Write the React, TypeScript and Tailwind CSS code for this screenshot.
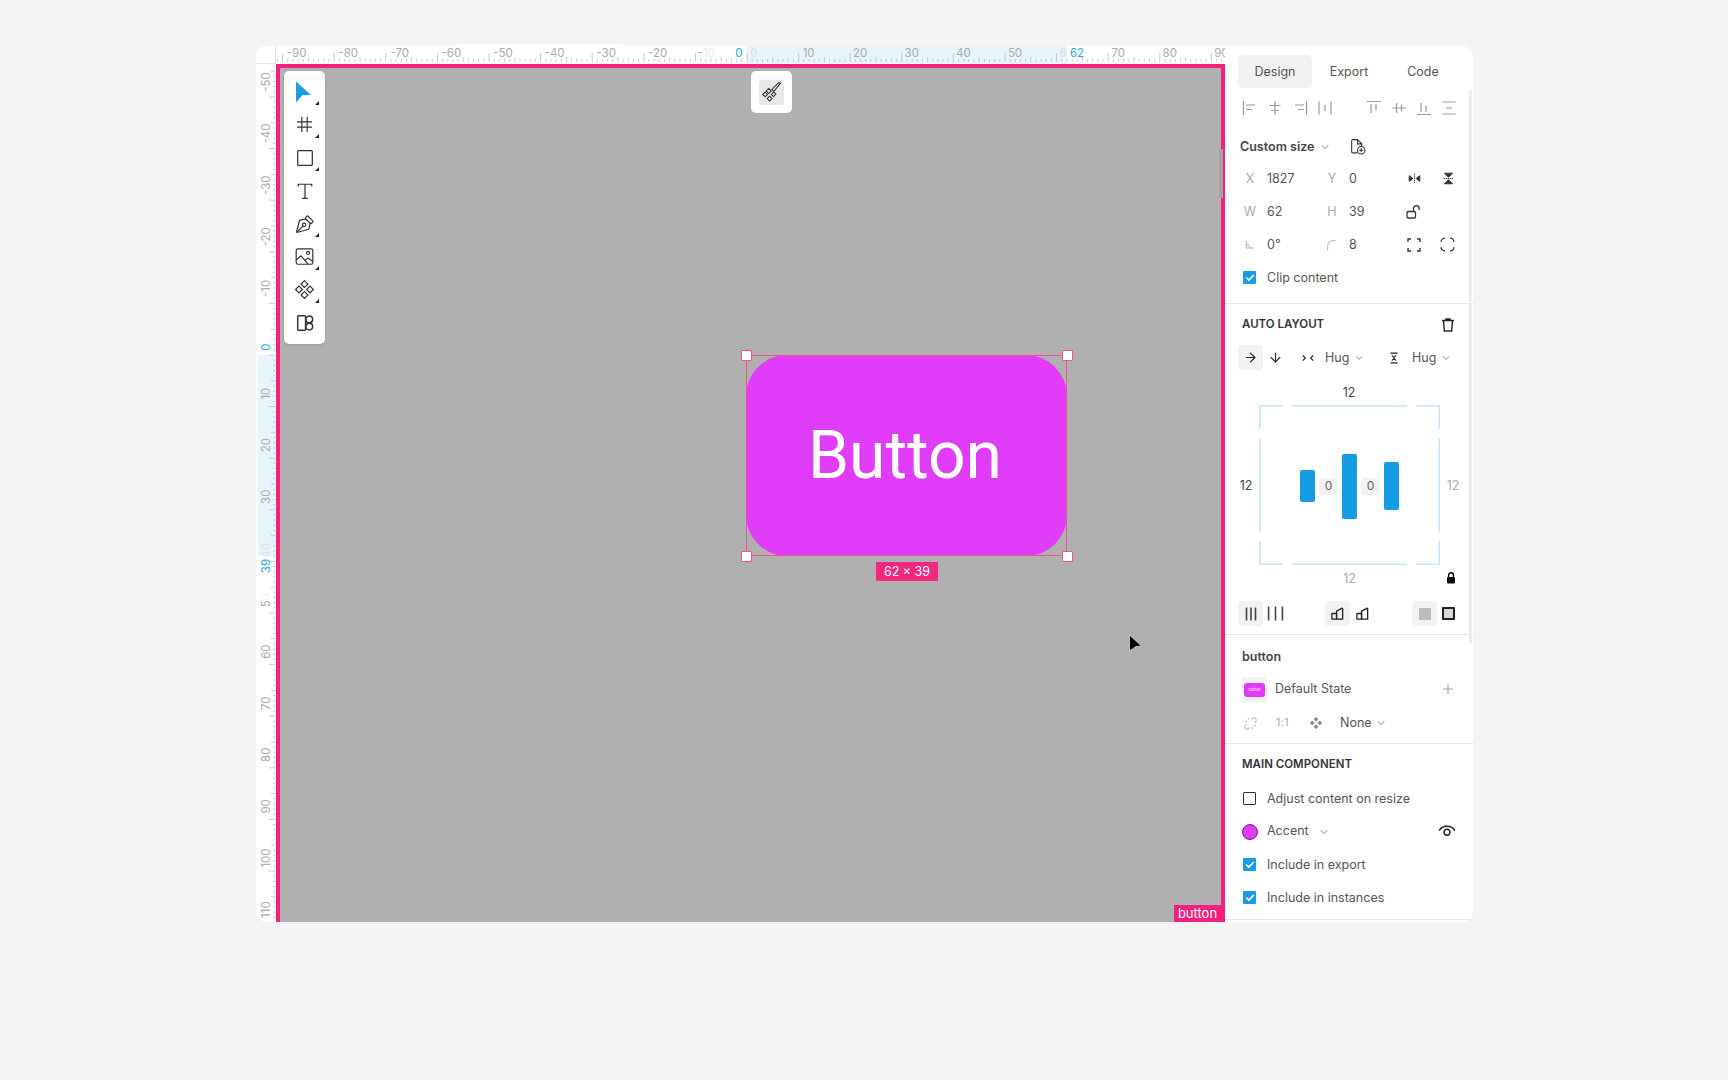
import React from 'react';
import { ArrowDown, ArrowRight, Check, ChevronDown, PenTool, Plus } from 'lucide-react';

const UNIT = 5.16;
const ORIGIN_X = 747 - 276;
const ORIGIN_Y = 355 - 64;

const Ic: React.FC<{ size?: number; className?: string; sw?: number; children: React.ReactNode }> = ({ size = 16, className, sw = 1.2, children }) => (
  <svg width={size} height={size} viewBox="0 0 16 16" fill="none" stroke="currentColor" strokeWidth={sw} className={className}>
    {children}
  </svg>
);

// Top ruler, ticks every unit and a label every ten
const TopRuler = () => {
  const ticks = Array.from({ length: 190 }, (_, i) => i - 95);
  const labels = [-90, -80, -70, -60, -50, -40, -30, -20, 10, 20, 30, 40, 50, 70, 80, 90];
  return (
    <svg width={949} height={18} className="shrink-0 block">
      <rect x={ORIGIN_X} y={0} width={320} height={18} fill="#e6f4fc" />
      {ticks.map(u => {
        const x = ORIGIN_X + u * UNIT;
        const len = u % 10 === 0 ? 9 : u % 5 === 0 ? 5 : 3;
        return <line key={u} x1={x} x2={x} y1={16 - len} y2={16} stroke="#bdbdbd" strokeWidth={0.8} />;
      })}
      {labels.map(u => (
        <text key={u} x={ORIGIN_X + u * UNIT + (u < 0 ? 14 : 10)} y={11} textAnchor="middle" fontSize={11.5} fill="#ababab">
          {u}
        </text>
      ))}
      <text x={ORIGIN_X - 41} y={11} textAnchor="middle" fontSize={11.5} fill="#ababab">
        -<tspan fillOpacity={0.25}>10</tspan>
      </text>
      <text x={ORIGIN_X + 7} y={11} textAnchor="middle" fontSize={11.5} fill="#ababab" fillOpacity={0.3}>0</text>
      <text x={ORIGIN_X + 316} y={11} textAnchor="middle" fontSize={11.5} fill="#ababab" fillOpacity={0.3}>6</text>
      <text x={ORIGIN_X - 8} y={11} textAnchor="middle" fontSize={11.5} fill="#2ba6ee">0</text>
      <text x={ORIGIN_X + 330} y={11} textAnchor="middle" fontSize={11.5} fill="#2ba6ee">62</text>
    </svg>
  );
};

const SideRuler = () => {
  const ticks = Array.from({ length: 170 }, (_, i) => i - 57);
  const labels = [-50, -40, -30, -20, -10, 10, 20, 30, 60, 70, 80, 90, 100, 110];
  const label = (y: number, fill: string, text: React.ReactNode, op = 1) => (
    <text transform={`translate(14 ${y}) rotate(-90)`} textAnchor="middle" fontSize={11.5} fill={fill} fillOpacity={op}>
      {text}
    </text>
  );
  return (
    <svg width={20} height={858} className="shrink-0 block">
      <rect x={2} y={ORIGIN_Y} width={18} height={201} fill="#e6f4fc" />
      {ticks.map(u => {
        const y = ORIGIN_Y + u * UNIT;
        const len = u % 10 === 0 ? 6 : u % 5 === 0 ? 4 : 2;
        return <line key={u} x1={19 - len} x2={19} y1={y} y2={y} stroke="#bdbdbd" strokeWidth={0.8} />;
      })}
      {labels.map(u => (
        <React.Fragment key={u}>{label(ORIGIN_Y + u * UNIT - (u < 0 ? 15 : 13), '#ababab', u)}</React.Fragment>
      ))}
      {label(ORIGIN_Y + 40 * UNIT - 11, '#ababab', 40, 0.25)}
      {label(ORIGIN_Y + 50 * UNIT - 13, '#ababab', <><tspan>5</tspan><tspan fillOpacity={0.2}>0</tspan></>)}
      {label(ORIGIN_Y - 8, '#2ba6ee', 0)}
      {label(ORIGIN_Y + 211, '#2ba6ee', 39)}
    </svg>
  );
};

const ToolBtn: React.FC<{ more?: boolean; children: React.ReactNode }> = ({ more = true, children }) => (
  <div className="relative h-[33px] flex items-center justify-center text-[#333]">
    {children}
    {more && <span className="absolute right-[6px] bottom-[3px] w-0 h-0 border-l-[4px] border-l-transparent border-b-[4px] border-b-[#222]" />}
  </div>
);

const Toolbar = () => (
  <div className="absolute left-[4px] top-[3px] w-[41px] pt-[4px] pb-[5px] bg-white rounded-[5px] shadow-sm">
    <ToolBtn>
      <svg width={20} height={24} viewBox="0 0 20 24" className="mr-[3px]"><path d="M3 1.5 L18 15 L9.5 15 L3 22.5 Z" fill="#1a9de6" /></svg>
    </ToolBtn>
    <ToolBtn>
      <Ic size={17} sw={1.1}><path d="M5.5 1v14M10.5 1v14M1 5.5h14M1 10.5h14" /></Ic>
    </ToolBtn>
    <ToolBtn>
      <Ic size={18} sw={1.1}><rect x="1.5" y="1.5" width="13" height="13" rx="0.8" /></Ic>
    </ToolBtn>
    <ToolBtn more={false}>
      <Ic size={18} sw={1.1}><path d="M2 4V2h12v2M8 2v12M5.5 14.5h5" /></Ic>
    </ToolBtn>
    <ToolBtn>
      <PenTool size={20} strokeWidth={1.4} className="-scale-y-100" />
    </ToolBtn>
    <ToolBtn>
      <Ic size={19} sw={1}>
        <rect x="1" y="1.5" width="14" height="13" rx="1.5" />
        <circle cx="11" cy="5" r="1.3" />
        <path d="M1 11 L5 7.5 L11 14.5 M8.5 11 L11 9.5 L15 12" />
      </Ic>
    </ToolBtn>
    <ToolBtn>
      <Ic size={21} sw={0.9}>
        <path d="M8 1.2 10.6 3.8 8 6.4 5.4 3.8Z M8 9.6 10.6 12.2 8 14.8 5.4 12.2Z M3.8 5.4 6.4 8 3.8 10.6 1.2 8Z M12.2 5.4 14.8 8 12.2 10.6 9.6 8Z" />
      </Ic>
    </ToolBtn>
    <ToolBtn more={false}>
      <Ic size={18} sw={1.3}>
        <rect x="1.5" y="1.5" width="7" height="13" rx="0.8" />
        <circle cx="11.8" cy="4.8" r="3" />
        <circle cx="11.8" cy="11.2" r="3" />
      </Ic>
    </ToolBtn>
  </div>
);

const Handle: React.FC<{ className: string }> = ({ className }) => (
  <span className={`absolute w-[11px] h-[11px] bg-white border-[1.5px] border-[#f0528f] rounded-[1px] ${className}`} />
);

const Canvas = () => (
  <div className="relative flex-1 bg-[#b0b0b0] border-4 border-b-0 border-[#f5207e]">
    <Toolbar />
    <div className="absolute left-[471px] top-[3px] w-[41px] h-[42px] bg-white rounded-[5px] flex items-center justify-center">
      <div className="w-[25px] h-[25px] bg-[#e8e8e8] rounded-[3px] flex items-center justify-center text-[#333]">
        <Ic size={24} sw={0.7}>
          <path d="M13.6 2.2 12.6 1.6 7.9 6.3 9.2 7.6Z" />
          <path d="M5.8 5.6 7.5 7.3 5.8 9 4.1 7.3Z M9.2 8 10.6 9.4 9 11 7.6 9.6Z M3.4 8 5 9.6 3.4 11.2 1.8 9.6Z M6.4 10.8 8 12.4 6.4 14 4.8 12.4Z" />
        </Ic>
      </div>
    </div>

    {/* Selected frame */}
    <div className="absolute left-[466px] top-[287px] w-[321px] h-[201px]">
      <div className="w-full h-full pr-[3px] bg-[#e03cfa] rounded-[41px] flex items-center justify-center">
        <span className="text-white text-[66px] leading-none font-['Roboto',sans-serif]">Button</span>
      </div>
      <div className="absolute inset-0 border-[1.5px] border-[#f0528f]" />
      <Handle className="-left-[5.5px] -top-[5.5px]" />
      <Handle className="-right-[5.5px] -top-[5.5px]" />
      <Handle className="-left-[5.5px] -bottom-[5.5px]" />
      <Handle className="-right-[5.5px] -bottom-[5.5px]" />
      <div className="absolute left-[130px] top-[207px] w-[62px] h-[19px] pt-[1px] bg-[#f2277e] rounded-[1px] flex items-center justify-center text-white text-[12.5px]">
        62 × 39
      </div>
    </div>

    <svg className="absolute left-[848px] top-[566px]" width={15} height={18} viewBox="0 0 15 18">
      <path d="M1.5 1 L13.5 12 L8 12.5 L1.5 17 Z" fill="#000" stroke="#fff" strokeWidth={0.6} />
    </svg>
    <div className="absolute -right-[2px] top-[81px] w-[4px] h-[49px] bg-[#a3a3a3]" />
    <div className="absolute right-0 bottom-0 w-[47px] h-[17px] bg-[#f5207e] flex items-center justify-center text-white text-[13px] leading-none">
      button
    </div>
  </div>
);

const AlignIcons = () => {
  const paths = [
    'M1.5 1v14M4 5h9M4 9.5h6',
    'M8 1v14M2.5 5.5h11M4 10.5h8',
    'M14.5 1v14M3 5h9M6 9.5h6',
    'M2 1.5v13M14 1.5v13M8 5v6',
    'M1 1.5h14M5 4v9M10 4v6',
    'M1 8h14M5.5 3v10M10.5 4.5v7',
    'M1 14.5h14M5 3v9M10 6v6',
    'M1.5 2h13M1.5 14h13M5 8h6',
  ];
  return (
    <div className="h-[40px] mb-[4px] ml-[12px] flex items-center text-[#9a9a9a]">
      {paths.map((d, i) => (
        <div key={i} className={`w-[25px] flex justify-center ${i === 3 ? 'mr-[24px]' : ''}`}>
          <Ic size={16} sw={1.2}><path d={d} /></Ic>
        </div>
      ))}
    </div>
  );
};

const PropRow: React.FC<{ a: React.ReactNode; av: string; b: React.ReactNode; bv: string; i1?: React.ReactNode; i2?: React.ReactNode }> = ({ a, av, b, bv, i1, i2 }) => (
  <div className="h-[33px] ml-[13px] grid grid-cols-[28px_54px_29px_48px_34px_34px] items-center">
    <div className="w-[24px] pt-[1px] flex justify-center text-[#aaa]">{a}</div>
    <div className="pt-[1px] pl-[1px]">{av}</div>
    <div className="w-[24px] pt-[1px] flex justify-center text-[#aaa]">{b}</div>
    <div className="pt-[1px]">{bv}</div>
    <div className="flex justify-center text-[#333]">{i1}</div>
    <div className="flex justify-center text-[#333]">{i2}</div>
  </div>
);

const CheckRow: React.FC<{ label: string; on?: boolean }> = ({ label, on = true }) => (
  <div className="h-[33px] flex items-center gap-[11px]">
    {on ? (
      <span className="w-[13px] h-[13px] ml-[1px] bg-[#1a9de6] rounded-[1px] flex items-center justify-center text-white">
        <Check size={10} strokeWidth={4} />
      </span>
    ) : (
      <span className="w-[13px] h-[13px] ml-[1px] border-[1.5px] border-[#333] rounded-[1px]" />
    )}
    <span className="pt-[1px]">{label}</span>
  </div>
);

const Active: React.FC<{ on?: boolean; className?: string; children: React.ReactNode }> = ({ on, className = '', children }) => (
  <div className={`w-[25px] h-[25px] rounded-[4px] flex items-center justify-center text-[#222] ${on ? 'bg-[#f2f2f2]' : ''} ${className}`}>
    {children}
  </div>
);

const PaddingFrame = () => (
  <svg width={181} height={160} className="absolute inset-0" fill="none" stroke="#c5e6f7" strokeWidth={1.5}>
    <path d="M0.75 24V0.75H24M33 0.75H148M157 0.75H180.25V24M180.25 33V127M180.25 136V159.25H157M148 159.25H33M24 159.25H0.75V136M0.75 127V33" />
  </svg>
);

const GapChip = () => (
  <span className="w-[19px] h-[17px] rounded-[4px] bg-[#f2f2f2] flex items-center justify-center text-[12px]">0</span>
);

const Panel = () => (
  <div className="relative w-[248px] shrink-0 text-[12.5px] text-[#555] overflow-hidden">
    <div className="absolute right-[1px] top-[44px] w-[3px] h-[553px] bg-[#ececec]" />

    <div className="pt-[9px] pl-[13px] flex">
      {['Design', 'Export', 'Code'].map((t, i) => (
        <div key={t} className={`w-[74px] h-[33px] pt-[1px] rounded-[5px] flex items-center justify-center ${i === 0 ? 'bg-[#f2f2f2]' : ''}`}>{t}</div>
      ))}
    </div>

    <div className="border-b border-[#e6e6e6] pb-[9px]">
      <AlignIcons />
      <div className="h-[30px] pl-[15px] flex items-center">
        <span className="font-semibold text-[#444] w-[75px]">Custom size</span>
        <ChevronDown size={12} className="ml-[4px] text-[#888]" />
        <Ic size={17} sw={1} className="ml-[18px] mb-[2px] text-[#333]">
          <path d="M8 14H3.5a1 1 0 0 1-1-1V2.5a1 1 0 0 1 1-1H8l4 4v2M8 1.5v4h4" />
          <circle cx="11.5" cy="11.5" r="3.5" />
          <path d="M11.5 9.5v4M9.5 11.5h4" />
        </Ic>
      </div>
      <PropRow
        a="X" av="1827" b="Y" bv="0"
        i1={<Ic size={13}><path d="M8 2v12" strokeDasharray="1.5 1" /><path d="M1.5 4.5v7L6 8Z M14.5 4.5v7L10 8Z" fill="currentColor" /></Ic>}
        i2={<Ic size={13}><path d="M2 8h12" strokeDasharray="1.5 1" /><path d="M3 1.5h10L8 6.5Z M3 14.5h10L8 9.5Z" fill="currentColor" /></Ic>}
      />
      <PropRow
        a="W" av="62" b="H" bv="39"
        i1={<Ic size={16} sw={1.3}><rect x="1" y="7.5" width="8.5" height="6.5" rx="1.2" /><path d="M7.5 7.5V4.5a2.8 2.8 0 0 1 5.6 0V6" /></Ic>}
      />
      <PropRow
        a={<Ic size={12}><path d="M3 2v10h10M3 7a5 5 0 0 1 5 5" /></Ic>} av="0°"
        b={<Ic size={14} className="text-[#bbb]"><path d="M3 14V9a6 6 0 0 1 6-6h3" /></Ic>} bv="8"
        i1={<Ic size={16} sw={1.4}><path d="M2 5V2h3M11 2h3v3M14 11v3h-3M5 14H2v-3" /></Ic>}
        i2={<Ic size={17} sw={1.3} className="mr-[2px]"><path d="M2 5.5A3.5 3.5 0 0 1 5.5 2M10.5 2A3.5 3.5 0 0 1 14 5.5M14 10.5a3.5 3.5 0 0 1-3.5 3.5M5.5 14A3.5 3.5 0 0 1 2 10.5" /></Ic>}
      />
      <div className="pl-[17px]"><CheckRow label="Clip content" /></div>
    </div>

    <div className="border-b border-[#e6e6e6] pb-[8px]">
      <div className="h-[24px] mt-[8px] pt-[1px] pl-[17px] pr-[17px] flex items-center justify-between text-[#333]">
        <span className="font-semibold text-[11.5px]">AUTO LAYOUT</span>
        <Ic size={16} sw={1.4} className="text-[#222]">
          <path d="M2 3.5h12M6 3.5V2h4v1.5M3.5 3.5l.8 10.5h7.4l.8-10.5" />
        </Ic>
      </div>
      <div className="mt-[9px] pl-[13px] flex items-center h-[25px]">
        <Active on><ArrowRight size={15} strokeWidth={1.8} /></Active>
        <Active><ArrowDown size={15} strokeWidth={1.8} /></Active>
        <Ic size={14} sw={1.3} className="ml-[13px] text-[#222]"><path d="M2 5l3 3-3 3M14 5l-3 3 3 3" /></Ic>
        <span className="ml-[10px] w-[26px] pt-[1px]">Hug</span>
        <ChevronDown size={12} className="ml-[2px] text-[#888]" />
        <Ic size={14} sw={1.3} className="ml-[22px] text-[#222]"><path d="M4 2.5h8M5.5 5 8 7.5 10.5 5M4 13.5h8M5.5 11 8 8.5 10.5 11" /></Ic>
        <span className="ml-[11px] w-[26px] pt-[1px]">Hug</span>
        <ChevronDown size={12} className="ml-[2px] text-[#888]" />
      </div>

      <div className="mt-[14px] h-[16px] pt-[1px] text-center text-[#444] leading-[16px]">12</div>
      <div className="mt-[5px] ml-[8px] flex items-center text-[#444]">
        <div className="w-[26px] pt-[2px] text-center">12</div>
        <div className="relative w-[181px] h-[160px] pt-[2px] flex items-center justify-center gap-[4px] text-[#666]">
          <PaddingFrame />
          <span className="w-[15px] h-[32px] bg-[#149ce5] rounded-[2px]" />
          <GapChip />
          <span className="w-[15px] h-[65px] bg-[#149ce5] rounded-[2px]" />
          <GapChip />
          <span className="w-[15px] h-[48px] bg-[#149ce5] rounded-[2px]" />
        </div>
        <div className="w-[26px] pt-[2px] text-center text-[#aaa]">12</div>
      </div>
      <div className="mt-[5px] ml-[8px] w-[233px] h-[16px] grid grid-cols-[1fr_auto_1fr] items-center text-[#aaa]">
        <span />
        <span>12</span>
        <span className="flex justify-end pr-[10px] pb-[2px] text-black">
          <svg width={10} height={12} viewBox="0 0 10 12">
            <path d="M2.6 5V3.2a2.4 2.4 0 0 1 4.8 0V5" fill="none" stroke="currentColor" strokeWidth={1.4} />
            <rect x="1" y="5" width="8" height="6.5" rx="1" fill="currentColor" />
          </svg>
        </span>
      </div>

      <div className="mt-[15px] pl-[13px] flex items-center h-[25px]">
        <Active on>
          <Ic size={16} sw={1.6} className="text-[#444]"><path d="M3.5 1.5v13M8 1.5v13M12.5 1.5v13" /></Ic>
        </Active>
        <Active>
          <Ic size={17} sw={1.5} className="text-[#444]"><path d="M1.5 1.5v13M8 1.5v13M14.5 1.5v13" /></Ic>
        </Active>
        <Active on className="ml-[37px]">
          <Ic size={15} sw={1.4}><rect x="2" y="8" width="5" height="6" rx="0.6" /><path d="M7 14V5.5L12.5 2.5a.7.7 0 0 1 1 .6V14Z" /></Ic>
        </Active>
        <Active>
          <Ic size={15} sw={1.4}><rect x="2" y="8" width="5" height="6" rx="0.6" /><path d="M7 14V5.5L12.5 2.5a.7.7 0 0 1 1 .6V14Z" /></Ic>
        </Active>
        <Active on className="ml-[37px]">
          <span className="w-[12px] h-[12px] bg-[#bdbdbd]" />
        </Active>
        <Active>
          <span className="w-[13px] h-[13px] mr-[2px] bg-[#d8d8d8] border-2 border-[#222] rounded-[1px]" />
        </Active>
      </div>
    </div>

    <div className="border-b border-[#e6e6e6] pb-[10px]">
      <div className="mt-[14px] h-[16px] px-[17px] flex items-center font-semibold text-[#444]">button</div>
      <div className="mt-[12px] pl-[17px] h-[25px] flex items-center">
        <div className="w-[25px] h-[25px] bg-[#f2f2f2] flex items-center justify-center">
          <div className="w-[21px] h-[14px] bg-[#e03cfa] rounded-[3px] flex items-center justify-center text-white text-[4px]">button</div>
        </div>
        <span className="ml-[8px] flex-1">Default State</span>
        <Plus size={16} strokeWidth={1} className="mr-[17px] mb-[1px] text-[#777]" />
      </div>
      <div className="mt-[11px] h-[20px] pl-[18px] flex items-center">
        <Ic size={15} sw={1.1} className="text-[#bbb]">
          <path d="M9 3.8l1.2-1.2a2.5 2.5 0 0 1 3.5 3.5L12.5 7.3M7 12.2l-1.2 1.2a2.5 2.5 0 0 1-3.5-3.5L3.5 8.7M5.8 2v2M2 5.8h2M10.2 14v-2M14 10.2h-2" />
        </Ic>
        <span className="ml-[18px] w-[20px] text-[10.5px] text-[#aaa] tracking-[0.5px]">1:1</span>
        <Ic size={14} sw={1} className="ml-[13px] text-[#888]">
          <path d="M8 1.5 10.2 3.7 8 5.9 5.8 3.7Z M8 10.1 10.2 12.3 8 14.5 5.8 12.3Z M3.7 5.8 5.9 8 3.7 10.2 1.5 8Z M12.3 5.8 14.5 8 12.3 10.2 10.1 8Z" fill="currentColor" />
        </Ic>
        <span className="ml-[17px] w-[30px]">None</span>
        <ChevronDown size={12} className="ml-[5px] text-[#888]" />
      </div>
    </div>

    <div className="border-b border-[#e6e6e6] px-[17px] pb-[5px]">
      <div className="mt-[12px] pt-[1px] h-[16px] flex items-center font-semibold text-[11.5px] text-[#333]">MAIN COMPONENT</div>
      <div className="mt-[10px]">
        <CheckRow label="Adjust content on resize" on={false} />
        <div className="h-[33px] flex items-center">
          <span className="w-[16px] h-[16px] rounded-full bg-[#e03cfa] border border-[#7e1a92]" />
          <span className="ml-[9px] w-[43px]">Accent</span>
          <ChevronDown size={12} className="ml-[8px] text-[#888]" />
          <Ic size={18} sw={1.3} className="ml-auto mb-[3px] text-[#222]">
            <path d="M1 8.5C4 3.5 12 3.5 15 8.5" />
            <circle cx="8" cy="10" r="2.6" />
          </Ic>
        </div>
        <CheckRow label="Include in export" />
        <CheckRow label="Include in instances" />
      </div>
    </div>
  </div>
);

export default function App() {
  return (
    <div className="relative h-[1080px] bg-[#f4f4f4] pt-[46px] pl-[256px] font-['Inter',sans-serif]">
      <div className="absolute left-[457px] top-[44px] w-[166px] h-[2px] bg-white" />
      <div className="w-[1217px] h-[876px] bg-white rounded-[10px] overflow-hidden flex">
        <div className="w-[969px] flex flex-col">
          <div className="h-[18px] flex">
            <div className="w-[20px] h-[18px] border-r border-b border-[#e4e4e4] shrink-0" />
            <div className="overflow-hidden"><TopRuler /></div>
          </div>
          <div className="flex-1 flex min-h-0">
            <div className="overflow-hidden"><SideRuler /></div>
            <Canvas />
          </div>
        </div>
        <Panel />
      </div>
    </div>
  );
}
